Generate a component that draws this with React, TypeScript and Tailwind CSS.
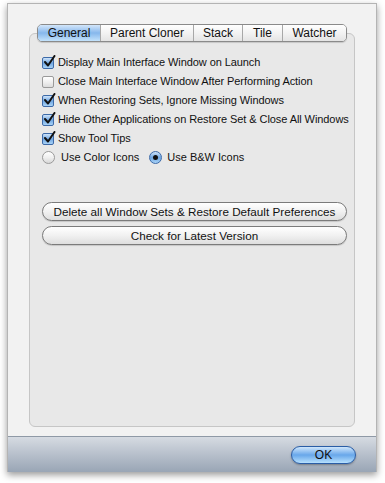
import { ReactNode } from "react"

const tabs = [
    { label: "General", width: "w-[62px]" },
    { label: "Parent Cloner", width: "w-[93px]" },
    { label: "Stack", width: "w-[49px]" },
    { label: "Tile", width: "w-[40px]" },
    { label: "Watcher", width: "w-[64px]" },
]

const options = [
    { label: "Display Main Interface Window on Launch", checked: true },
    { label: "Close Main Interface Window After Performing Action", checked: false },
    { label: "When Restoring Sets, Ignore Missing Windows", checked: true },
    { label: "Hide Other Applications on Restore Set & Close All Windows", checked: true },
    { label: "Show Tool Tips", checked: true },
]

function Checkbox({ checked }: { checked: boolean }) {
    return (
        <span className="relative w-[12px] h-[12px] shrink-0">
            <span
                className={
                    checked
                        ? "absolute inset-0 rounded-[2px] border border-[#3d6aa8] bg-gradient-to-b from-[#cfe4f9] via-[#6fa6e2] to-[#a9d3f7]"
                        : "absolute inset-0 rounded-[2px] border border-[#9a9a9a] bg-gradient-to-b from-[#ffffff] via-[#f0f0f0] to-[#dcdcdc]"
                }
            />
            {checked && (
                <svg className="absolute left-[1px] -top-[2px]" width="13" height="13" viewBox="0 0 13 13">
                    <path d="M2 7 L5 10.5 L11.5 1" fill="none" stroke="#111" strokeWidth="2" strokeLinecap="round" strokeLinejoin="round" />
                </svg>
            )}
        </span>
    )
}

function Radio({ selected }: { selected: boolean }) {
    return (
        <span
            className={
                selected
                    ? "w-[13px] h-[13px] shrink-0 rounded-full border border-[#3d6aa8] bg-gradient-to-b from-[#cfe4f9] via-[#6fa6e2] to-[#a9d3f7] flex items-center justify-center"
                    : "w-[13px] h-[13px] shrink-0 rounded-full border border-[#9a9a9a] bg-gradient-to-b from-[#ffffff] via-[#f0f0f0] to-[#d8d8d8]"
            }
        >
            {selected && <span className="w-[5px] h-[5px] rounded-full bg-[#111]" />}
        </span>
    )
}

function PillButton({ children }: { children: ReactNode }) {
    return (
        <button className="w-[305px] h-[19px] rounded-full border border-[#7b7b7b] bg-gradient-to-b from-[#ffffff] via-[#f1f1f1] to-[#dedede] text-[11.7px] text-[#111] leading-none flex items-center justify-center shadow-[0_1px_1px_rgba(0,0,0,0.15)]">
            {children}
        </button>
    )
}

export default function App() {
    return (
        <div className="w-[385px] h-[483px] bg-white font-['Liberation_Sans',Arial,sans-serif]">
            <div className="ml-[7px] pt-[3px] w-[370px]">
                <div className="h-[469px] flex flex-col border-x border-t border-[#b4b4b4] shadow-[0_3px_7px_rgba(0,0,0,0.4)]">
                    {/* Content */}
                    <div className="flex-1 bg-[#f2f2f2] px-[21px] pt-[20px] pb-[9px] flex flex-col">
                        {/* Tabs */}
                        <div className="flex justify-center relative z-10">
                            <div className="flex h-[18px] rounded-[5px] border border-[#8a8a8a] overflow-hidden shadow-[0_1px_1px_rgba(0,0,0,0.15)]">
                                {tabs.map((tab, i) => (
                                    <div
                                        key={tab.label}
                                        className={
                                            (i === 0
                                                ? "bg-gradient-to-b from-[#d3e6fa] via-[#86b7ec] to-[#c3e2fb] "
                                                : "bg-gradient-to-b from-[#ffffff] via-[#f3f3f3] to-[#e4e4e4] border-l border-[#a8a8a8] ") +
                                            tab.width +
                                            " flex items-center justify-center text-[12px] text-[#111] leading-none"
                                        }
                                    >
                                        {tab.label}
                                    </div>
                                ))}
                            </div>
                        </div>

                        {/* Panel */}
                        <div className="-mt-[9px] flex-1 rounded-[6px] border border-[#c6c6c6] bg-[#e8e8e8] pl-[12px] pt-[19px]">
                            <div className="flex flex-col">
                                {options.map((opt) => (
                                    <div key={opt.label} className="h-[19px] flex items-center gap-[4px] text-[11px] tracking-[-0.08px] text-[#111]">
                                        <Checkbox checked={opt.checked} />
                                        <span>{opt.label}</span>
                                    </div>
                                ))}
                                <div className="h-[19px] flex items-center text-[11px] text-[#111]">
                                    <Radio selected={false} />
                                    <span className="ml-[6px]">Use Color Icons</span>
                                    <span className="ml-[10px]"><Radio selected={true} /></span>
                                    <span className="ml-[5px]">Use B&amp;W Icons</span>
                                </div>
                            </div>

                            <div className="mt-[35px] flex flex-col gap-[5px]">
                                <PillButton>Delete all Window Sets &amp; Restore Default Preferences</PillButton>
                                <PillButton>Check for Latest Version</PillButton>
                            </div>
                        </div>
                    </div>

                    {/* Bottom bar */}
                    <div className="h-[36px] border-t border-[#8f99a6] bg-gradient-to-b from-[#d6dbe2] to-[#99a5b5] flex items-center justify-end pr-[20px]">
                        <button className="w-[65px] h-[18px] rounded-full border border-[#2a5da6] bg-gradient-to-b from-[#cfe6fb] via-[#68a7ea] to-[#b6e0fd] text-[12px] text-[#111] leading-none shadow-[0_1px_2px_rgba(0,0,0,0.3)]">
                            OK
                        </button>
                    </div>
                </div>
            </div>
        </div>
    )
}
